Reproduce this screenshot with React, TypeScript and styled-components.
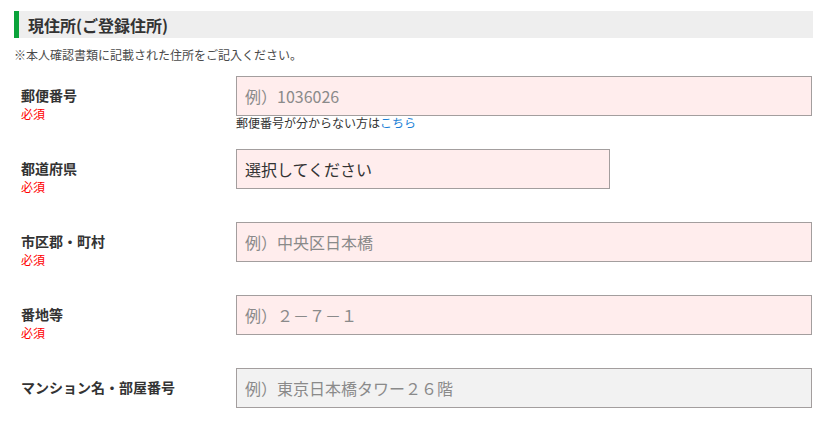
import React from "react";
import styled, { createGlobalStyle } from "styled-components";

const GlobalStyle = createGlobalStyle`
  body {
    margin: 0;
    background: #ffffff;
    font-family: "Noto Sans CJK JP", "Noto Sans", sans-serif;
    color: #333333;
  }
`;

const Page = styled.div`
  padding: 11px 14px 0;
`;

const SectionTitle = styled.h2`
  margin: 0;
  height: 27px;
  display: flex;
  align-items: center;
  padding-left: 9px;
  background: #eeeeee;
  border-left: 5px solid #0aa33a;
  font-size: 16px;
  font-weight: bold;
  color: #333333;
  box-sizing: border-box;
`;

const Note = styled.p`
  margin: 8px 0 12px;
  font-size: 12px;
  line-height: 18px;
  color: #4a4a4a;
`;

const Row = styled.div`
  display: flex;
  align-items: flex-start;
  min-height: 73px;
`;

const LabelCell = styled.div`
  width: 222px;
  padding: 9px 0 0 7px;
  box-sizing: border-box;
  display: flex;
  flex-direction: column;
`;

const LabelText = styled.span`
  font-size: 14px;
  font-weight: bold;
  line-height: 20px;
  color: #333333;
`;

const Required = styled.span`
  font-size: 12px;
  line-height: 17px;
  color: #ff0000;
`;

const FieldCell = styled.div`
  display: flex;
  flex-direction: column;
`;

const TextInput = styled.input<{ $required?: boolean }>`
  width: 576px;
  height: 40px;
  box-sizing: border-box;
  padding: 0 8px;
  border: 1px solid #a39e9e;
  border-radius: 0;
  background: ${(p) => (p.$required ? "#ffeded" : "#f2f2f2")};
  font-family: inherit;
  font-size: 16px;
  color: #333333;
  outline: none;
  &::placeholder {
    color: #8a8a8a;
  }
`;

const Select = styled.select`
  width: 374px;
  height: 40px;
  box-sizing: border-box;
  padding: 0 8px;
  border: 1px solid #a39e9e;
  border-radius: 0;
  background: #ffeded;
  font-family: inherit;
  font-size: 16px;
  color: #333333;
  appearance: none;
  -webkit-appearance: none;
  outline: none;
`;

const Hint = styled.span`
  font-size: 12px;
  line-height: 14px;
  color: #333333;
  a {
    color: #1a7fd6;
    text-decoration: none;
  }
`;

interface FieldRowProps {
  label: string;
  required?: boolean;
  children: React.ReactNode;
}

const FieldRow = ({ label, required, children }: FieldRowProps) => (
  <Row>
    <LabelCell>
      <LabelText>{label}</LabelText>
      {required && <Required>必須</Required>}
    </LabelCell>
    <FieldCell>{children}</FieldCell>
  </Row>
);

export default function App() {
  return (
    <Page>
      <GlobalStyle />
      <SectionTitle>現住所(ご登録住所)</SectionTitle>
      <Note>※本人確認書類に記載された住所をご記入ください。</Note>
      <FieldRow label="郵便番号" required>
        <TextInput $required placeholder="例）1036026" />
        <Hint>
          郵便番号が分からない方は<a href="#">こちら</a>
        </Hint>
      </FieldRow>
      <FieldRow label="都道府県" required>
        <Select defaultValue="">
          <option value="">選択してください</option>
        </Select>
      </FieldRow>
      <FieldRow label="市区郡・町村" required>
        <TextInput $required placeholder="例）中央区日本橋" />
      </FieldRow>
      <FieldRow label="番地等" required>
        <TextInput $required placeholder="例）２－７－１" />
      </FieldRow>
      <FieldRow label="マンション名・部屋番号">
        <TextInput placeholder="例）東京日本橋タワー２６階" />
      </FieldRow>
    </Page>
  );
}
